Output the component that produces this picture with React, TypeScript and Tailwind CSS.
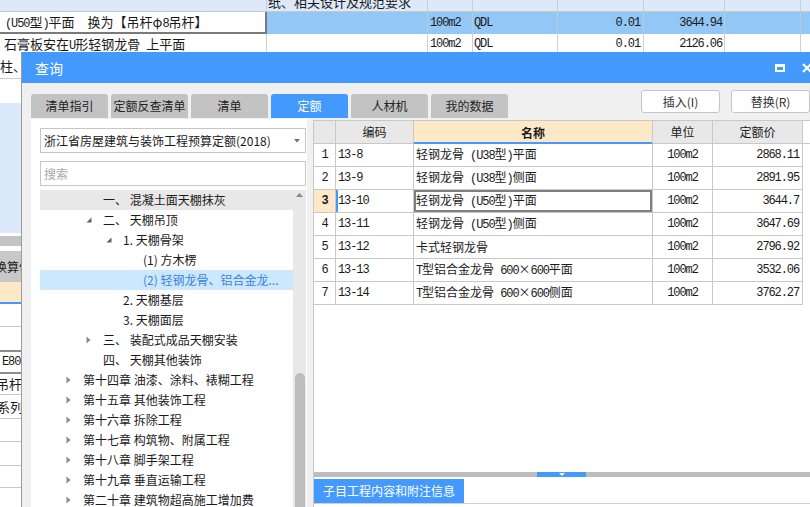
import React from "react";

const monoCls = "font-['Liberation_Mono',monospace] text-[12px] tracking-[-1.1px]";

function Mixed({ s }: { s: string }) {
  const parts = s.split(/([\x20-\x7E]+)/).filter((p) => p.length > 0);
  return (
    <span className="whitespace-pre">
      {parts.map((p, i) =>
        /^[\x20-\x7E]+$/.test(p) ? (
          <span key={i} className={monoCls}>
            {p}
          </span>
        ) : (
          <span key={i}>{p}</span>
        )
      )}
    </span>
  );
}

const TriOpen = () => (
  <svg width="6" height="6" viewBox="0 0 6 6">
    <path d="M5.5 0.5V5.5H0.5Z" fill="#5e5e5e" />
  </svg>
);
const TriClosed = () => (
  <svg width="5" height="8" viewBox="0 0 5 8">
    <path d="M0.5 0.5L4.5 4L0.5 7.5Z" fill="#8a8a8a" />
  </svg>
);

type TreeItem = { l: number; t: string; tri?: "open" | "closed"; sel?: boolean; grey?: boolean };

const tree: TreeItem[] = [
  { l: 1, t: "一、 混凝土面天棚抹灰", grey: true },
  { l: 1, t: "二、 天棚吊顶", tri: "open" },
  { l: 2, t: "1. 天棚骨架", tri: "open" },
  { l: 3, t: "(1) 方木楞" },
  { l: 3, t: "(2) 轻钢龙骨、铝合金龙...", sel: true },
  { l: 2, t: "2. 天棚基层" },
  { l: 2, t: "3. 天棚面层" },
  { l: 1, t: "三、 装配式成品天棚安装", tri: "closed" },
  { l: 1, t: "四、 天棚其他装饰" },
  { l: 0, t: "第十四章 油漆、涂料、裱糊工程", tri: "closed" },
  { l: 0, t: "第十五章 其他装饰工程", tri: "closed" },
  { l: 0, t: "第十六章 拆除工程", tri: "closed" },
  { l: 0, t: "第十七章 构筑物、附属工程", tri: "closed" },
  { l: 0, t: "第十八章 脚手架工程", tri: "closed" },
  { l: 0, t: "第十九章 垂直运输工程", tri: "closed" },
  { l: 0, t: "第二十章 建筑物超高施工增加费", tri: "closed" },
];

const indent = ["pl-[26px]", "pl-[46px]", "pl-[66px]", "pl-[86px]"];

const rows = [
  ["1", "13-8", "轻钢龙骨 (U38型)平面", "100m2", "2868.11"],
  ["2", "13-9", "轻钢龙骨 (U38型)侧面", "100m2", "2891.95"],
  ["3", "13-10", "轻钢龙骨 (U50型)平面", "100m2", "3644.7"],
  ["4", "13-11", "轻钢龙骨 (U50型)侧面", "100m2", "3647.69"],
  ["5", "13-12", "卡式轻钢龙骨", "100m2", "2796.92"],
  ["6", "13-13", "T型铝合金龙骨 600×600平面", "100m2", "3532.06"],
  ["7", "13-14", "T型铝合金龙骨 600×600侧面", "100m2", "3762.27"],
];

const tabs = ["清单指引", "定额反查清单", "清单", "定额", "人材机", "我的数据"];

export default function App() {
  return (
    <div className="relative w-[810px] h-[507px] overflow-hidden bg-white font-['Noto_Sans_CJK_SC',sans-serif] text-[#1a1a1a]">
      {/* background spreadsheet */}
      <div className="flex flex-col">
        <div className="flex h-[11px] bg-[#dde8f8] overflow-hidden">
          <div className="w-[267px] shrink-0 border-r border-[#c4cfdd]" />
          <div className="w-[161px] shrink-0 border-r border-[#c4cfdd] overflow-hidden">
            <div className="-mt-[7px] pl-[1px] text-[13px] leading-[17px] whitespace-nowrap">纸、相关设计及规范要求</div>
          </div>
          <div className="w-[45px] shrink-0 border-r border-[#c4cfdd]" />
          <div className="w-[85px] shrink-0 border-r border-[#c4cfdd]" />
          <div className="w-[86px] shrink-0 border-r border-[#c4cfdd]" />
          <div className="w-[81px] shrink-0 border-r border-[#c4cfdd]" />
          <div className="w-[76px] shrink-0 border-r border-[#c4cfdd]" />
          <div className="flex-1" />
        </div>
        <div className="flex h-[23px] border-t border-[#c8c8c8]">
          <div className="w-[267px] shrink-0 bg-white border-r-2 border-b-2 border-[#7a7a7a] flex items-center pl-[5px] text-[13px] whitespace-nowrap">
            <Mixed s="(U50型)平面　换为【吊杆φ8吊杆】" />
          </div>
          <div className="flex flex-1 bg-[#93c7f5]">
            <div className="w-[161px] shrink-0 border-r border-[#b9cadb]" />
            <div className={`w-[45px] shrink-0 border-r border-[#b9cadb] flex items-center pl-[2px] ${monoCls}`}>100m2</div>
            <div className={`w-[85px] shrink-0 border-r border-[#b9cadb] flex items-center pl-[1px] ${monoCls}`}>QDL</div>
            <div className={`w-[86px] shrink-0 border-r border-[#b9cadb] flex items-center justify-end pr-[3px] ${monoCls}`}>0.01</div>
            <div className={`w-[81px] shrink-0 border-r border-[#b9cadb] flex items-center justify-end pr-[2px] ${monoCls}`}>3644.94</div>
            <div className="w-[76px] shrink-0 border-r border-[#b9cadb]" />
            <div className="flex-1" />
          </div>
        </div>
        <div className="flex h-[20px]">
          <div className="w-[267px] shrink-0 border-r border-[#d0d0d0] flex items-center pl-[4px] text-[13px] whitespace-nowrap">
            <Mixed s="石膏板安在U形轻钢龙骨 上平面" />
          </div>
          <div className="w-[161px] shrink-0 border-r border-[#d0d0d0]" />
          <div className={`w-[45px] shrink-0 border-r border-[#d0d0d0] flex items-center pl-[2px] ${monoCls}`}>100m2</div>
          <div className={`w-[85px] shrink-0 border-r border-[#d0d0d0] flex items-center pl-[1px] ${monoCls}`}>QDL</div>
          <div className={`w-[86px] shrink-0 border-r border-[#d0d0d0] flex items-center justify-end pr-[3px] ${monoCls}`}>0.01</div>
          <div className={`w-[81px] shrink-0 border-r border-[#d0d0d0] flex items-center justify-end pr-[2px] ${monoCls}`}>2126.06</div>
          <div className="w-[76px] shrink-0 border-r border-[#d0d0d0]" />
          <div className="flex-1" />
        </div>
        {/* left strip visible beside the dialog */}
        <div className="w-[21px] flex flex-col overflow-hidden text-[13px] whitespace-nowrap">
          <div className="h-[25px] border-b border-[#c8c8c8] flex items-center">柱、</div>
          <div className="h-[24px]" />
          <div className="h-[130px] bg-[#dce9fb]" />
          <div className="h-[3px]" />
          <div className="h-[10px] bg-[#c4c4c4]" />
          <div className="h-[5px]" />
          <div className="h-[31px] bg-[#c8c8c8] flex items-center overflow-hidden">
            <span className="-ml-[5px] text-[12px]">换算信息</span>
          </div>
          <div className="h-[20px] bg-[#fde8c8]" />
          <div className="h-[2px] bg-[#4499ff]" />
          <div className="h-[23px] border-b border-[#c8c8c8]" />
          <div className="h-[25px] border-b-2 border-[#8c8c8c]" />
          <div className={`h-[22px] border-b-2 border-[#8c8c8c] flex items-center pl-[2px] ${monoCls}`}>E80</div>
          <div className="h-[21px] border-b border-[#c8c8c8] flex items-center overflow-hidden">
            <span className="-ml-[4px]">吊杆</span>
          </div>
          <div className="h-[24px] border-b border-[#c8c8c8] flex items-center overflow-hidden">
            <span className="-ml-[3px]">系列</span>
          </div>
          <div className="h-[23px] border-b border-[#c8c8c8]" />
          <div className="h-[24px] border-b border-[#c8c8c8]" />
          <div className="h-[22px] border-b border-[#c8c8c8]" />
          <div className="h-[22px] border-b border-[#c8c8c8]" />
        </div>
      </div>

      {/* query dialog window */}
      <div className="absolute left-[21px] top-[52px] w-[800px] h-[455px] flex flex-col bg-[#f0f0f0] border-l border-[#9c9c9c]">
        {/* title bar */}
        <div className="h-[31px] shrink-0 bg-[#4499ff] flex items-center pl-[13px] pr-[9px] text-white">
          <span className="text-[14px] leading-[20px]">查询</span>
          <div className="ml-auto flex items-center gap-[17px]">
            <div className="w-[10px] h-[8px] border-2 border-t-[3px] border-white" />
            <svg width="10" height="10" viewBox="0 0 10 10">
              <path d="M1 1L9 9M9 1L1 9" stroke="white" strokeWidth="2" />
            </svg>
          </div>
        </div>
        {/* tabs + buttons */}
        <div className="h-[35px] shrink-0 flex pl-[9px] pr-[11px]">
          <div className="flex items-end gap-[3px]">
            {tabs.map((t) => (
              <div
                key={t}
                className={`w-[77px] h-[24px] rounded-t-[3px] flex items-center justify-center text-[12px] ${
                  t === "定额" ? "bg-[#4499ff] text-white" : "bg-[#c3c3c3] text-[#222]"
                }`}
              >
                {t}
              </div>
            ))}
          </div>
          <div className="ml-auto mt-[7px] flex gap-[11px]">
            <div className="w-[79px] h-[23px] bg-white border border-[#c5c5c5] rounded-[3px] flex items-center justify-center text-[12px] text-[#333]">
              插入(I)
            </div>
            <div className="w-[79px] h-[23px] bg-white border border-[#c5c5c5] rounded-[3px] flex items-center justify-center text-[12px] text-[#333]">
              替换(R)
            </div>
          </div>
        </div>
        {/* content */}
        <div className="flex-1 min-h-0 flex">
          {/* left panel */}
          <div className="ml-[9px] mt-[1px] w-[276px] shrink-0 bg-white flex flex-col pl-[9px] pt-[9px] pr-[1px] text-[12px]">
            <div className="h-[25px] shrink-0 border border-[#c6c6c6] flex items-center pl-[3px] whitespace-nowrap">
              <span>浙江省房屋建筑与装饰工程预算定额(2018)</span>
              <svg className="ml-auto mr-[5px]" width="6" height="4" viewBox="0 0 6 4">
                <path d="M0 0H6L3 3.5Z" fill="#707070" />
              </svg>
            </div>
            <div className="mt-[8px] h-[25px] shrink-0 border border-[#c6c6c6] flex items-center pl-[3px] text-[#a8a8a8]">
              搜索
            </div>
            <div className="mt-[4px] flex-1 min-h-0 flex overflow-hidden">
              <div className="w-[253px] shrink-0 flex flex-col">
                {tree.map((it, i) => (
                  <div
                    key={i}
                    className={`h-[20px] shrink-0 flex items-center ${indent[it.l]} ${
                      it.sel ? "bg-[#cce8ff] text-[#3b82e0]" : it.grey ? "bg-[#e8e8e8]" : ""
                    }`}
                  >
                    <div className="w-[17px] shrink-0 flex items-center">
                      {it.tri === "open" ? <TriOpen /> : it.tri === "closed" ? <TriClosed /> : null}
                    </div>
                    <span className="whitespace-pre leading-[20px]">{it.t}</span>
                  </div>
                ))}
              </div>
              <div className="w-[13px] shrink-0 bg-[#e8e8e8] flex flex-col items-center">
                <svg className="mt-[3px]" width="7" height="4" viewBox="0 0 7 4">
                  <path d="M0 4L3.5 0L7 4Z" fill="#8a8a8a" />
                </svg>
                <div className="mt-auto w-[10px] h-[134px] rounded-t-full bg-[#bdbdbd]" />
              </div>
            </div>
          </div>
          {/* right table */}
          <div className="ml-[6px] mt-[2px] flex-1 flex flex-col bg-white border-l border-t border-[#c8c8c8]">
            <div className="h-[351px] shrink-0 flex flex-col">
              <div className="flex h-[23px] shrink-0 text-[12px]">
                <div className="w-[22px] shrink-0 bg-[#e8e8e8] border-r border-b border-[#c8c8c8]" />
                <div className="w-[78px] shrink-0 bg-[#e8e8e8] border-r border-b border-[#c8c8c8] flex items-center justify-center">编码</div>
                <div className="w-[239px] shrink-0 bg-[#fde8c8] border-r border-[#c8c8c8] shadow-[inset_0_-2px_0_#4499ff] flex items-center justify-center font-bold">名称</div>
                <div className="w-[60px] shrink-0 bg-[#e8e8e8] border-r border-b border-[#c8c8c8] flex items-center justify-center">单位</div>
                <div className="w-[90px] shrink-0 bg-[#e8e8e8] border-r border-b border-[#c8c8c8] flex items-center justify-center">定额价</div>
                <div className="flex-1 border-b border-[#c8c8c8]" />
              </div>
              {rows.map((r) => {
                const cur = r[0] === "3";
                return (
                  <div key={r[0]} className="flex h-[23px] shrink-0 text-[12px]">
                    <div
                      className={`w-[22px] shrink-0 border-r border-b border-[#c8c8c8] flex items-center justify-center ${monoCls} ${
                        cur ? "bg-[#fde8c8] font-bold" : ""
                      }`}
                    >
                      {r[0]}
                    </div>
                    <div
                      className={`w-[78px] shrink-0 border-r border-b border-[#c8c8c8] flex items-center pl-[2px] ${monoCls} ${
                        cur ? "shadow-[inset_2px_0_0_#4499ff]" : ""
                      }`}
                    >
                      {r[1]}
                    </div>
                    <div
                      className={`w-[239px] shrink-0 border-r border-b border-[#c8c8c8] flex items-center pl-[2px] whitespace-nowrap ${
                        cur ? "shadow-[inset_0_0_0_2px_#808080]" : ""
                      }`}
                    >
                      <Mixed s={r[2]} />
                    </div>
                    <div className={`w-[60px] shrink-0 border-r border-b border-[#c8c8c8] flex items-center justify-center ${monoCls}`}>
                      {r[3]}
                    </div>
                    <div className={`w-[90px] shrink-0 border-r border-b border-[#c8c8c8] flex items-center justify-end pr-[3px] ${monoCls}`}>
                      {r[4]}
                    </div>
                    <div className="flex-1" />
                  </div>
                );
              })}
            </div>
            {/* splitter */}
            <div className="h-[5px] shrink-0 bg-[#bdbdbd] flex">
              <div className="ml-[223px] w-[49px] bg-[#4499ff] flex justify-center">
                <svg className="mt-[1px]" width="6" height="3" viewBox="0 0 6 3">
                  <path d="M0 0H6L3 3Z" fill="white" />
                </svg>
              </div>
            </div>
            {/* bottom tab */}
            <div className="pt-[2px] border-b border-[#d0d0d0] flex">
              <div className="w-[150px] h-[24px] bg-[#4499ff] text-white text-[12px] flex items-center justify-center">
                子目工程内容和附注信息
              </div>
            </div>
            <div className="flex-1" />
          </div>
        </div>
      </div>
    </div>
  );
}
